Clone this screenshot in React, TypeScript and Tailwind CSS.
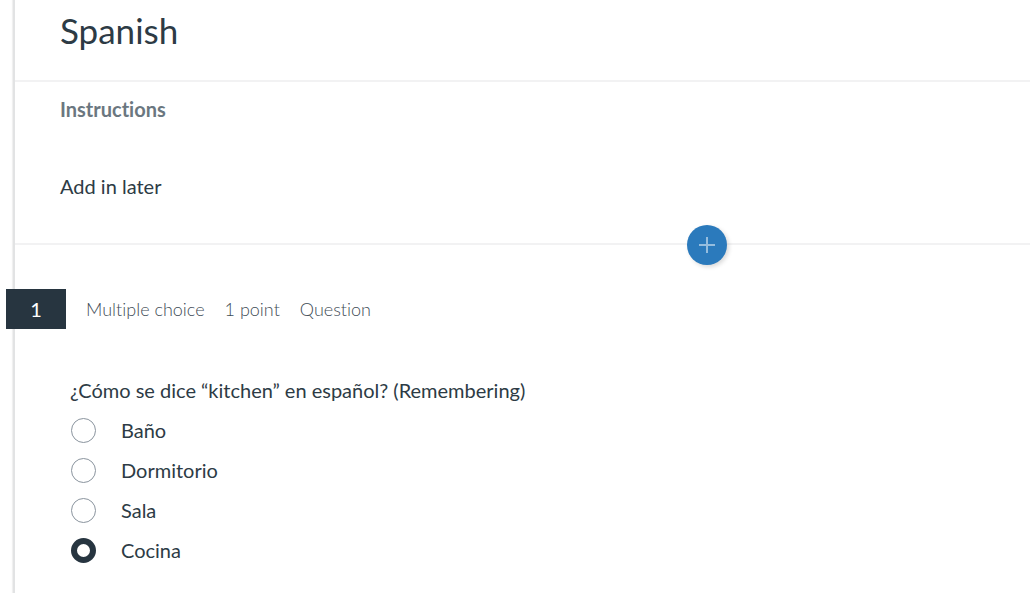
import { useState } from 'react';

const CHOICES = [
  { id: 'bano', label: 'Baño' },
  { id: 'dormitorio', label: 'Dormitorio' },
  { id: 'sala', label: 'Sala' },
  { id: 'cocina', label: 'Cocina' }
];

const DETAILS = ['Multiple choice', '1 point', 'Question'];

export default function App() {
  const [answer, setAnswer] = useState('cocina');

  return (
    <div className="min-h-screen bg-white pl-[13px] font-['Lato',sans-serif] text-[#2d3b45] [font-variant-ligatures:none]">
      <main className="min-h-screen border-l-2 border-[#e2e3e4] shadow-[-1px_0_1px_rgba(0,0,0,0.06)]">
        <header className="h-[82px] border-b-2 border-[#f2f2f3] px-[45px] pt-[6px]">
          <h1 className="text-[35px] leading-[48px]">Spanish</h1>
        </header>

        <section className="relative h-[163px] border-b-2 border-[#f2f2f3] px-[45px] pt-[14px]">
          <h2 className="text-[20px] leading-[26px] font-bold text-[#6b7780]">Instructions</h2>
          <p className="mt-[51px] text-[20px] leading-[26px]">Add in later</p>
          <button
            type="button"
            aria-label="Add question"
            className="absolute -bottom-[22px] left-[672px] flex size-10 items-center justify-center rounded-full bg-[#2b7abc] shadow-[2px_2px_4px_rgba(0,0,0,0.15)]"
          >
            <svg width="16" height="16" viewBox="0 0 16 16" stroke="#95bdde" strokeWidth="2" aria-hidden="true">
              <path d="M8 0v16M0 8h16" />
            </svg>
          </button>
        </section>

        <section className="pt-11">
          <div className="-ml-[9px] flex items-center gap-5 text-[18px] text-[#3f4d57]">
            <span className="flex h-10 w-[60px] items-center justify-center bg-[#273540] text-[20px] text-white">1</span>
            {DETAILS.map((detail) => (
              <span key={detail} className="font-light">{detail}</span>
            ))}
          </div>

          <fieldset className="mt-12 px-[55px] text-[20px]">
            <legend className="leading-[26px]">¿Cómo se dice “kitchen” en español? (Remembering)</legend>
            <div className="mt-[7px]">
              {CHOICES.map((choice) => (
                <label key={choice.id} className="flex h-10 items-center gap-[25px] pl-px">
                  <input
                    type="radio"
                    name="answer"
                    value={choice.id}
                    checked={answer === choice.id}
                    onChange={() => setAnswer(choice.id)}
                    className="size-[25px] appearance-none rounded-full border border-[#8a949e] bg-white checked:border-[6px] checked:border-[#273540]"
                  />
                  {choice.label}
                </label>
              ))}
            </div>
          </fieldset>
        </section>
      </main>
    </div>
  );
}
